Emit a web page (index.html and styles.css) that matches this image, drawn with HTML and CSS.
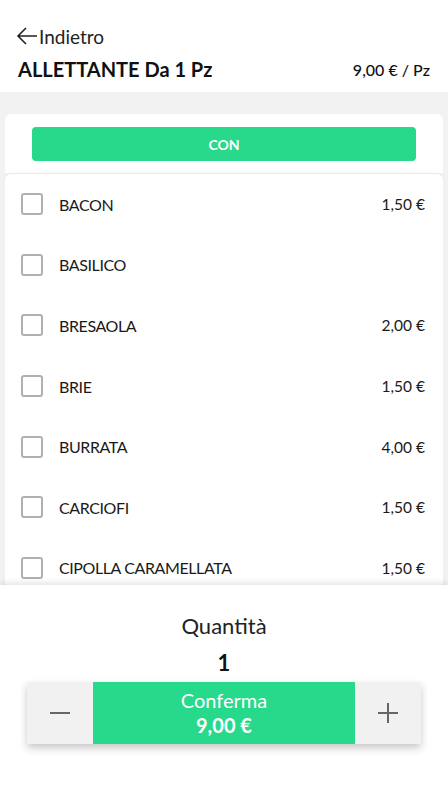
FILE: index.html
```html
<!DOCTYPE html>
<html lang="it">
<head>
<meta charset="utf-8">
<link rel="stylesheet" href="styles.css">
</head>
<body>
<div class="app">
  <header class="header">
    <div class="back">
      <svg class="back-icon" width="22" height="18" viewBox="0 0 22 18"><path d="M21 9H2M10 1L2 9l8 8" fill="none" stroke="#222" stroke-width="1.6"/></svg>
      <span>Indietro</span>
    </div>
    <div class="title-row">
      <h1 class="title">ALLETTANTE Da 1 Pz</h1>
      <span class="unit-price">9,00 € / Pz</span>
    </div>
  </header>
  <main class="main">
    <div class="tab-card">
      <div class="tab-btn">CON</div>
    </div>
    <div class="list-card">
      <div class="row"><span class="box"></span><span class="name">BACON</span><span class="price">1,50 €</span></div>
      <div class="row"><span class="box"></span><span class="name">BASILICO</span><span class="price"></span></div>
      <div class="row"><span class="box"></span><span class="name">BRESAOLA</span><span class="price">2,00 €</span></div>
      <div class="row"><span class="box"></span><span class="name">BRIE</span><span class="price">1,50 €</span></div>
      <div class="row"><span class="box"></span><span class="name">BURRATA</span><span class="price">4,00 €</span></div>
      <div class="row"><span class="box"></span><span class="name">CARCIOFI</span><span class="price">1,50 €</span></div>
      <div class="row"><span class="box"></span><span class="name">CIPOLLA CARAMELLATA</span><span class="price">1,50 €</span></div>
    </div>
  </main>
  <footer class="footer">
    <div class="qty-label">Quantità</div>
    <div class="qty">1</div>
    <div class="actions">
      <div class="step">
        <svg width="22" height="22" viewBox="0 0 22 22"><path d="M1 11h20" stroke="#666" stroke-width="2"/></svg>
      </div>
      <div class="confirm">
        <span class="confirm-label">Conferma</span>
        <span class="confirm-price">9,00 €</span>
      </div>
      <div class="step">
        <svg width="22" height="22" viewBox="0 0 22 22"><path d="M1 11h20M11 1v20" stroke="#666" stroke-width="2"/></svg>
      </div>
    </div>
  </footer>
</div>
</body>
</html>
```

FILE: styles.css
```css
* { box-sizing: border-box; margin: 0; padding: 0; }
html, body { width: 448px; height: 800px; overflow: hidden; }
body {
  font-family: "Lato", "Noto Sans", sans-serif;
  color: #111;
  background: #fff;
}
.app {
  display: flex;
  flex-direction: column;
  height: 800px;
}
.header {
  height: 92px;
  background: #fff;
  padding: 25px 18px 0 16px;
  flex: none;
}
.back {
  display: flex;
  align-items: center;
  gap: 1px;
  font-size: 19px;
  height: 22px;
  color: #222;
}
.back-icon { display: block; }
.title-row {
  display: flex;
  justify-content: space-between;
  align-items: center;
  margin-top: 10px;
  padding-left: 2px;
  height: 24px;
}
.title {
  font-size: 20px;
  font-weight: 700;
}
.unit-price {
  font-size: 16px;
  font-weight: 500;
}
.main {
  flex: 1;
  background: #f2f2f2;
  padding: 22px 5px 0 5px;
  overflow: hidden;
}
.tab-card {
  background: #fff;
  border-radius: 6px 6px 0 0;
  padding: 13px 27px 12px 27px;
}
.tab-btn {
  height: 34px;
  background: #29d98b;
  border-radius: 4px;
  color: #fff;
  font-weight: 700;
  font-size: 14px;
  display: flex;
  align-items: center;
  justify-content: center;
}
.list-card {
  background: #fff;
  border-radius: 6px 6px 0 0;
  margin-top: 1px;
  box-shadow: 0 -1px 2px rgba(0,0,0,0.04);
}
.row {
  height: 60.6px;
  display: flex;
  align-items: center;
  padding: 0 18px 0 16px;
  font-size: 16px;
  font-weight: 400;
  color: #1a1a1a;
}
.box {
  width: 22px;
  height: 22px;
  border: 2px solid #b0b0b0;
  border-radius: 3px;
  flex: none;
}
.name {
  margin-left: 16px;
  flex: 1;
  letter-spacing: -0.4px;
}
.price {
  font-size: 15.5px;
}
.footer {
  height: 215px;
  flex: none;
  background: #fff;
  box-shadow: 0 -2px 6px rgba(0,0,0,0.12);
  position: relative;
  display: flex;
  flex-direction: column;
  align-items: center;
  padding-top: 27px;
}
.qty-label {
  font-size: 22px;
  font-weight: 400;
  height: 28px;
  line-height: 28px;
  color: #222;
}
.qty {
  font-size: 22px;
  font-weight: 700;
  height: 28px;
  line-height: 28px;
  margin-top: 9px;
  color: #111;
}
.actions {
  margin-top: 5px;
  width: 394px;
  height: 62px;
  display: flex;
  box-shadow: 0 4px 8px rgba(0,0,0,0.22);
}
.step {
  width: 66px;
  background: #f1f1f1;
  display: flex;
  align-items: center;
  justify-content: center;
}
.confirm {
  flex: 1;
  background: #27d98a;
  color: #fff;
  display: flex;
  flex-direction: column;
  align-items: center;
  justify-content: center;
}
.confirm-label {
  font-size: 20px;
  font-weight: 400;
  line-height: 24px;
}
.confirm-price {
  font-size: 20px;
  font-weight: 700;
  line-height: 26px;
}
```
